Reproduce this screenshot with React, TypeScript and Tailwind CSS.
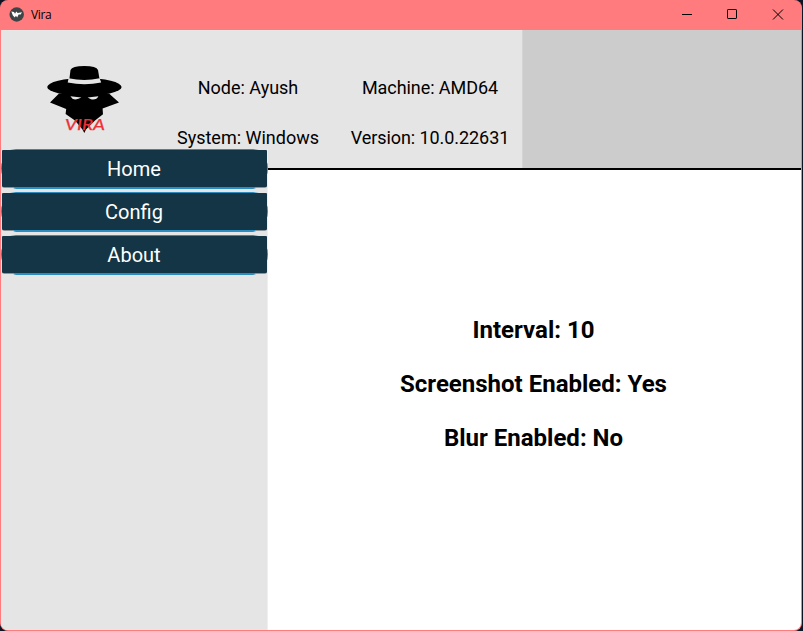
const info = [
  { texts: ['Node: Ayush', 'System: Windows'], spacing: '' },
  { texts: ['Machine: AMD64', 'Version: 10.0.22631'], spacing: 'tracking-[-0.07px]' },
];

const settings = ['Interval: 10', 'Screenshot Enabled: Yes', 'Blur Enabled: No'];

function AppIcon() {
  return (
    <svg className="mt-px h-[15px] w-[15px]" viewBox="0 0 15 15">
      <circle cx="7.7" cy="7.5" r="7.2" fill="#3f4446" />
      <path d="M2.3 4.4 5 5 6 6.8 7.3 4.4 8.6 6 13 5.2 11.6 7.4 9.6 7.6 8.2 10.6 6.9 8.8 5.8 10.6 3.9 8.6Z" fill="#fff" />
    </svg>
  );
}

function SpyLogo() {
  return (
    <svg className="h-[70px] w-[80px]" viewBox="0 0 80 70">
      <ellipse cx="39.4" cy="22" rx="37.2" ry="8.8" fill="#000" />
      <path d="M24 17 25.5 5Q27 1 39.3 1T53 5L55 17Z" fill="#000" />
      <path d="M23.6 13.3Q39.5 16.6 54.6 13.3L56.2 17.6Q39.5 21 22.7 17.6Z" fill="#e5e5e5" />
      <path d="M14 28.6 5 37.6 21.2 44 20.6 49 30 55.5 37.5 64.5 39.3 68 41 64.5 50 55.5 58 49.3 57.6 43.5 74 37.6 64 28.6Z" fill="#000" />
      <path d="M25.4 31.2 36.4 32.6Q31.5 35.5 27.5 33.8ZM42.6 32.6 53.4 31.2Q51.5 35.2 46 34.2Z" fill="#e5e5e5" />
      <text x="20" y="65" textLength="40" lengthAdjust="spacingAndGlyphs" fill="#ee3038" stroke="#ee3038" strokeWidth="0.25" fontFamily="Lato, sans-serif" fontSize="15.5" fontStyle="italic">VIRA</text>
    </svg>
  );
}

function NavButton({ label }: { label: string }) {
  return (
    <button className="relative flex h-10 w-[267px] items-center justify-center pr-px text-[20px] leading-none text-white">
      <svg className="absolute inset-0 h-10 w-[267px]" viewBox="0 0 267 40">
        <path d="M15 0H252L258 1V38L252 40H15L9 38V1Z" fill="#2a8cbf" />
        <path d="M2 11Q0 14 0 19.5T2 28ZM265 11Q267 14 267 19.5T265 28Z" fill="#2a8cbf" />
        <path d="M1 38H13V39H3ZM266 38H254V39H264Z" fill="#8d9498" />
        <rect x="1" y="1" width="265" height="37" rx="1" fill="#133545" />
      </svg>
      <span className="relative">{label}</span>
    </button>
  );
}

export default function App() {
  return (
    <div className="h-[631px] w-[803px] overflow-hidden bg-[#0b1524] pr-px font-['Roboto',sans-serif] text-black">
      <div className="flex h-[631px] w-[802px] flex-col overflow-hidden rounded-[8px] border border-t-0 border-[#ff7b7d] bg-[#ff7b7d]">
        <div className="flex h-[30px] shrink-0 items-center justify-between pb-[2px] pl-2 pr-[17px]">
          <div className="flex items-center gap-[7px]">
            <AppIcon />
            <span className="mt-[2px] font-['Open_Sans',sans-serif] text-[12px] leading-none tracking-[-0.4px]">Vira</span>
          </div>
          <svg className="h-[11px] w-[102px]" viewBox="0 0 102 11" fill="none" stroke="#000">
            <path d="M0 5.5H10" />
            <rect x="45.5" y="0.5" width="9" height="9" rx="0.6" />
            <path d="M91 0.5 101 10.5M101 0.5 91 10.5" />
          </svg>
        </div>
        <header className="flex h-[140px] shrink-0 border-b-2 border-black bg-[#cccccc]">
          <div className="flex w-[522px] border-r border-[#d4d4d4] bg-[#e5e5e5]">
            <div className="w-[156px] shrink-0 pl-[44px] pt-[35px]">
              <SpyLogo />
            </div>
            {info.map(({ texts, spacing }, i) => (
              <div key={i} className={`flex w-[182px] shrink-0 flex-col pt-[33px] text-center text-[18px] leading-[50px] ${spacing}`}>
                {texts.map((text) => (
                  <span key={text}>{text}</span>
                ))}
              </div>
            ))}
          </div>
        </header>
        <div className="flex min-h-0 flex-1 bg-white">
          <nav className="relative -mt-[21px] flex w-[267px] shrink-0 flex-col gap-[3px] border-r border-[#efefef] bg-[#e5e5e5]">
            <NavButton label="Home" />
            <NavButton label="Config" />
            <NavButton label="About" />
          </nav>
          <main className="flex flex-1 flex-col items-center pr-[2px] pt-[133px] text-[24px] font-bold leading-[54px]">
            {settings.map((text) => (
              <span key={text}>{text}</span>
            ))}
          </main>
        </div>
      </div>
    </div>
  );
}
